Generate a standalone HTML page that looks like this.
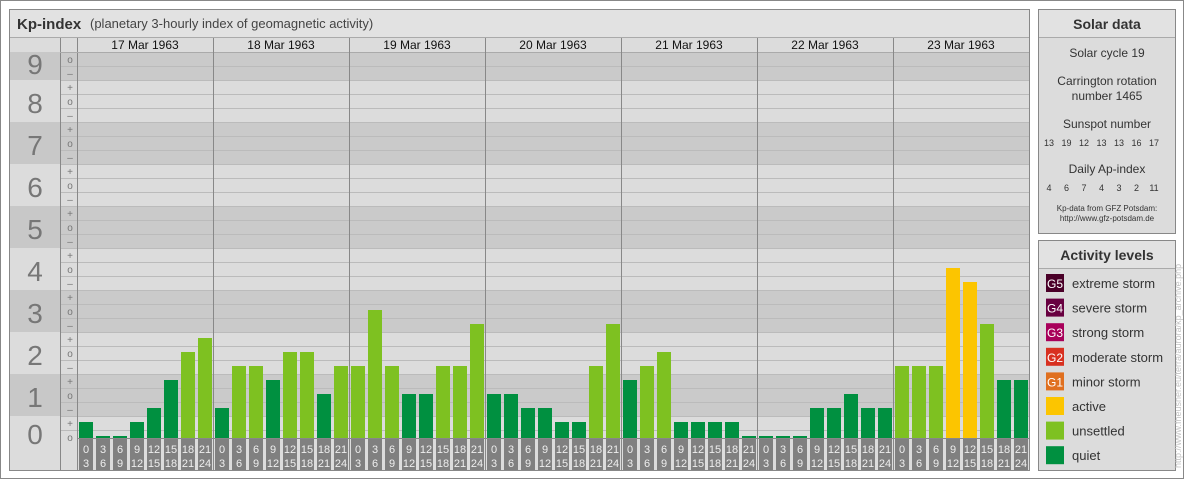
<!DOCTYPE html>
<html><head><meta charset="utf-8"><style>
html,body{margin:0;padding:0;background:#fff;}
svg{display:block;font-family:"Liberation Sans",sans-serif;}
</style></head><body>
<svg id="s" width="1184" height="480" xmlns="http://www.w3.org/2000/svg"></svg>
<script>
var s=document.getElementById('s'),h='';
function R(x,y,w,hh,f,st){h+='<rect x="'+x+'" y="'+y+'" width="'+w+'" height="'+hh+'" fill="'+f+'"'+(st?' stroke="'+st+'"':'')+'/>';}
function T(x,y,t,sz,f,a,extra){h+='<text x="'+x+'" y="'+y+'" font-size="'+sz+'" fill="'+f+'" text-anchor="'+(a||'start')+'" '+(extra||'')+'>'+t+'</text>';}
function L(x1,y1,x2,y2,c){h+='<line x1="'+x1+'" y1="'+y1+'" x2="'+x2+'" y2="'+y2+'" stroke="'+c+'" stroke-width="1"/>';}
// outer frame
R(0.5,0.5,1183,478,'#fff','#888');
// main panel
R(9.5,9.5,1020,461,'#dcdcdc','#888');
R(10,10,1019,27,'#e2e2e2');
L(10,37.5,1029,37.5,'#aaa');
h+='<text x="17" y="29" font-size="15" font-weight="bold" fill="#333">Kp-index</text>';
T(90,28,'(planetary 3-hourly index of geomagnetic activity)',13,'#444');
// date row
R(60,38,969,14,'#dcdcdc');
var dates=['17','18','19','20','21','22','23'];
// bands
var bands=[[9,52,28],[8,80,42],[7,122,42],[6,164,42],[5,206,42],[4,248,42],[3,290,42],[2,332,42],[1,374,42],[0,416,22]];
bands.forEach(function(b){var dark=b[0]%2==1;R(10,b[1],50,b[2],dark?'#c8c8c8':'#dcdcdc');R(60,b[1],969,b[2],dark?'#cacaca':'#dcdcdc');
 var cy=b[0]==9?b[1]+22:(b[0]==0?b[1]+28:b[1]+33);T(35,cy,b[0],28,'#777','middle');});
// sublines
for(var y=66;y<438;y+=14){L(60,y+0.5,1029,y+0.5,'#bbb');}
// sub labels
var subs=[];subs.push(['o',59],['\u2013',73]);
for(var k=8;k>=1;k--){var by=80+(8-k)*42;subs.push(['+',by+7],['o',by+21],['\u2013',by+35]);}
subs.push(['+',423],['o',437]);
subs.forEach(function(p){T(70,p[1]+4,p[0],10,'#777','middle');});
L(60.5,38,60.5,470,'#888');L(77.5,38,77.5,470,'#888');
L(60,52.5,1029,52.5,'#aaa');
for(var d=0;d<7;d++){var x=77+d*136;T(x+68,49,dates[d]+' Mar 1963',12,'#111','middle');if(d>0)L(x+0.5,38,x+0.5,470,'#888');}
// bars
var data=[[1,0,0,1,2,4,6,7],[2,5,5,4,6,6,3,5],[5,9,5,3,3,5,5,8],[3,3,2,2,1,1,5,8],[4,5,6,1,1,1,1,0],[0,0,0,2,2,3,2,2],[5,5,5,12,11,8,4,4]];
var hrs=[[0,3],[3,6],[6,9],[9,12],[12,15],[15,18],[18,21],[21,24]];
for(d=0;d<7;d++)for(var i=0;i<8;i++){var t=data[d][i],x=77+d*136+i*17+2,hh=14*t+2,c=t<=4?'#009040':(t<=10?'#7ec121':'#fcc500');
 R(x,438-hh,14,hh,c);R(x,439,14,31,'#808080');T(x+7,453,hrs[i][0],11,'#eee','middle');T(x+7,467,hrs[i][1],11,'#eee','middle');}
L(77,438.5,1029,438.5,'#888');
// Solar data panel
R(1038.5,9.5,137,224,'#dcdcdc','#888');R(1039,10,136,27,'#e2e2e2');L(1039,37.5,1175,37.5,'#aaa');
h+='<text x="1107" y="29" font-size="14" font-weight="bold" fill="#333" text-anchor="middle">Solar data</text>';
T(1107,57,'Solar cycle 19',12,'#333','middle');
T(1107,85,'Carrington rotation',12,'#333','middle');T(1107,100,'number 1465',12,'#333','middle');
T(1107,128,'Sunspot number',12,'#333','middle');
var ss=['13','19','12','13','13','16','17'],ap=['4','6','7','4','3','2','11'];
for(i=0;i<7;i++){T(1049+i*17.5,146,ss[i],9,'#333','middle');T(1049+i*17.5,191,ap[i],9,'#333','middle');}
T(1107,173,'Daily Ap-index',12,'#333','middle');
T(1107,211,'Kp-data from GFZ Potsdam:',8,'#333','middle');T(1107,221,'http://www.gfz-potsdam.de',8,'#333','middle');
// Activity levels
R(1038.5,240.5,137,230,'#dcdcdc','#888');R(1039,241,136,27,'#e2e2e2');L(1039,268.5,1175,268.5,'#aaa');
h+='<text x="1107" y="260" font-size="14" font-weight="bold" fill="#333" text-anchor="middle">Activity levels</text>';
var lv=[['G5','#4a0028','extreme storm'],['G4','#680040','severe storm'],['G3','#a8005a','strong storm'],['G2','#d83020','moderate storm'],['G1','#e07020','minor storm'],['','#fcc500','active'],['','#7ec121','unsettled'],['','#009040','quiet']];
lv.forEach(function(l,j){var y=274+j*24.6;R(1046,y,18,18,l[1]);if(l[0])T(1055,y+14,l[0],12,'#fff','middle');T(1072,y+14,l[2],13,'#333');});
// vertical url
h+='<text transform="translate(1181,468) rotate(-90)" font-size="9" fill="#c4c4c4">http://www.fheusner.eu/terra/aurora/kp_archive.php</text>';
s.innerHTML=h;
</script>
</body></html>
